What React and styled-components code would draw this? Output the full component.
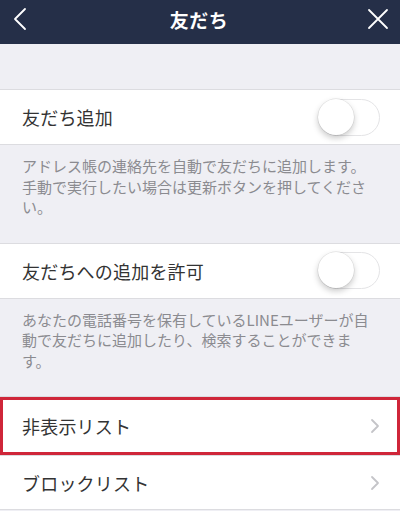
import React from 'react'
import styled, { createGlobalStyle } from 'styled-components'

const GlobalStyle = createGlobalStyle`
  html, body {
    margin: 0;
    padding: 0;
    background: #efeff4;
  }
  body {
    font-family: 'Noto Sans CJK JP', 'Noto Sans', sans-serif;
  }
`

const Page = styled.div`
  width: 400px;
  height: 511px;
  overflow: hidden;
  background: #efeff4;
  display: flex;
  flex-direction: column;
`

const Header = styled.header`
  height: 44px;
  box-sizing: border-box;
  padding: 0 10px 6px 8px;
  background: #252f48;
  display: flex;
  align-items: center;
  justify-content: space-between;
  flex-shrink: 0;
`

const Title = styled.h1`
  margin: 0;
  font-size: 19px;
  font-weight: 700;
  color: #ffffff;
  letter-spacing: 0.5px;
`

const IconButton = styled.button`
  width: 24px;
  height: 24px;
  padding: 0;
  border: none;
  background: none;
  display: flex;
  align-items: center;
  justify-content: center;
`

const Spacer = styled.div`
  height: 45px;
  flex-shrink: 0;
`

const Row = styled.div`
  height: ${p => p.$height || 55}px;
  box-sizing: border-box;
  background: #ffffff;
  border-top: 1px solid #dcdce0;
  border-bottom: ${p => (p.$last ? '1px solid #dcdce0' : 'none')};
  display: flex;
  align-items: center;
  justify-content: space-between;
  padding: 0 20px 0 22px;
  flex-shrink: 0;
  box-shadow: ${p => (p.$highlighted ? 'inset 0 0 0 3px #cf2639' : 'none')};
`

const RowLabel = styled.span`
  font-size: 18px;
  color: #333333;
  letter-spacing: 0.2px;
`

const Description = styled.p`
  margin: 0;
  padding: 11px 26px 25px 22px;
  border-top: 1px solid #dcdce0;
  font-size: 15px;
  line-height: 20.5px;
  color: #8b8b90;
  line-break: strict;
`

const Track = styled.div`
  width: 62px;
  height: 37px;
  box-sizing: border-box;
  border-radius: 19px;
  border: 1.5px solid #e4e4e6;
  background: #ffffff;
  position: relative;
`

const Knob = styled.div`
  position: absolute;
  top: -1px;
  left: -1px;
  width: 36px;
  height: 36px;
  border-radius: 50%;
  background: #ffffff;
  box-shadow: 0 3px 6px rgba(0, 0, 0, 0.22), 0 0 0 0.5px rgba(0, 0, 0, 0.12);
`

const Toggle = () => (
  <Track>
    <Knob />
  </Track>
)

const Chevron = () => (
  <svg width="10" height="16" viewBox="0 0 10 16">
    <path d="M2 2 L8 8 L2 14" fill="none" stroke="#c4c4c8" strokeWidth="1.8" strokeLinecap="round" strokeLinejoin="round" />
  </svg>
)

const App = () => (
  <Page>
    <GlobalStyle />
    <Header>
      <IconButton>
        <svg width="16" height="24" viewBox="0 0 16 24">
          <path d="M13 2 L3 12 L13 22" fill="none" stroke="#ffffff" strokeWidth="1.8" strokeLinecap="round" strokeLinejoin="round" />
        </svg>
      </IconButton>
      <Title>友だち</Title>
      <IconButton>
        <svg width="22" height="22" viewBox="0 0 22 22">
          <path d="M2 2 L20 20 M20 2 L2 20" fill="none" stroke="#ffffff" strokeWidth="1.8" strokeLinecap="round" />
        </svg>
      </IconButton>
    </Header>
    <Spacer />
    <Row $height={55}>
      <RowLabel>友だち追加</RowLabel>
      <Toggle />
    </Row>
    <Description>
      アドレス帳の連絡先を自動で友だちに追加します。手動で実行したい場合は更新ボタンを押してください。
    </Description>
    <Row $height={55}>
      <RowLabel>友だちへの追加を許可</RowLabel>
      <Toggle />
    </Row>
    <Description>
      あなたの電話番号を保有しているLINEユーザーが自動で友だちに追加したり、検索することができます。
    </Description>
    <Row $height={59} $highlighted>
      <RowLabel>非表示リスト</RowLabel>
      <Chevron />
    </Row>
    <Row $height={55} $last>
      <RowLabel>ブロックリスト</RowLabel>
      <Chevron />
    </Row>
  </Page>
)

export default App
